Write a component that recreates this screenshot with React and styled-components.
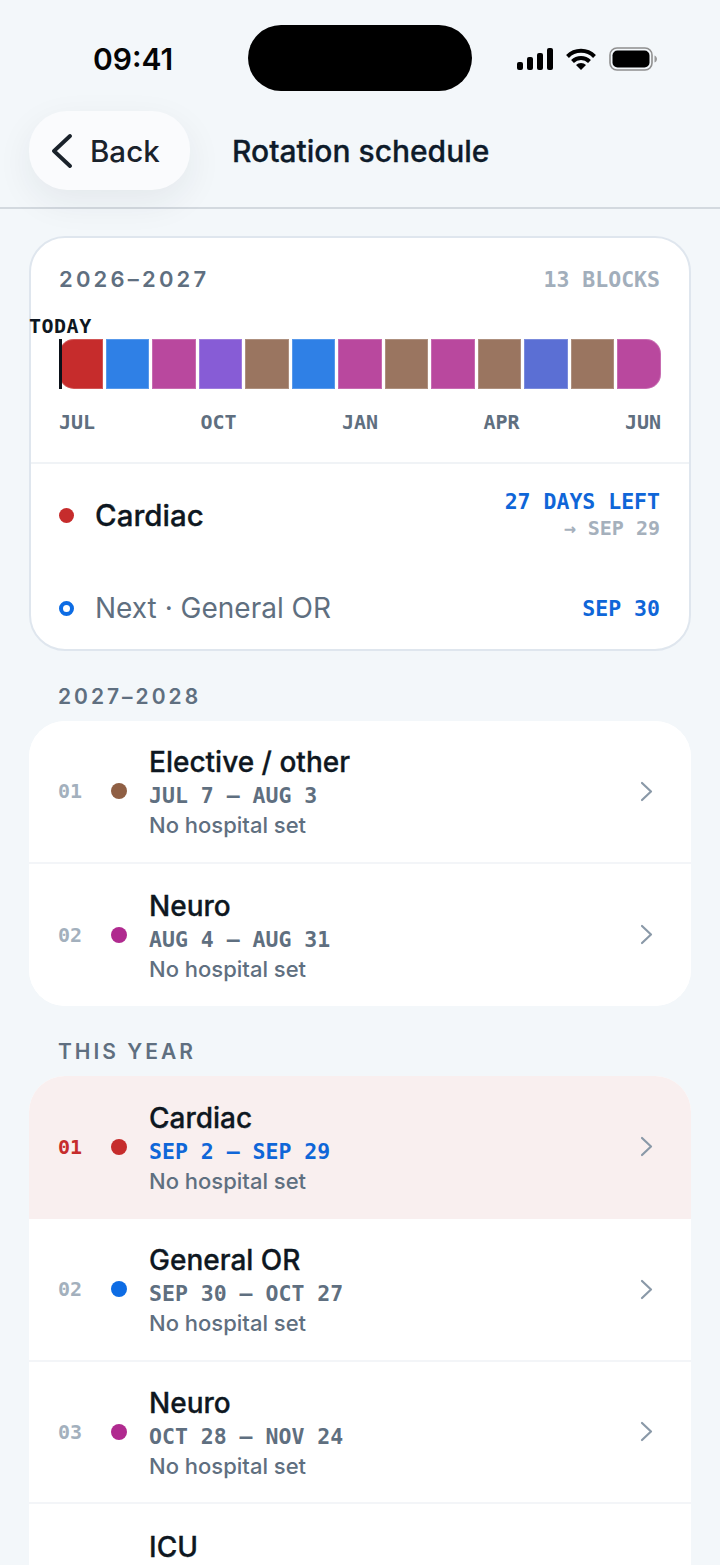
import React from 'react';
import styled, { createGlobalStyle } from 'styled-components';

const Global = createGlobalStyle`
    html, body {
        margin: 0;
        padding: 0;
        background: #f3f7fa;
        overflow: hidden;
    }
    * {
        box-sizing: border-box;
    }
`;

const SANS = '"Inter", "Liberation Sans", sans-serif';
const MONO = '"DejaVu Sans Mono", "Liberation Mono", monospace';

const Page = styled.div`
    width: 720px;
    height: 1565px;
    overflow: hidden;
    background: #f3f7fa;
    font-family: ${SANS};
    color: #0e1721;
`;

const StatusBar = styled.div`
    height: 111px;
    padding: 25px 63px 0 93px;
    display: flex;
    align-items: flex-start;
`;

const Clock = styled.div`
    width: 155px;
    font-size: 30px;
    line-height: 68px;
    font-weight: 600;
    color: #050505;
`;

const Island = styled.div`
    width: 224px;
    height: 66px;
    border-radius: 33px;
    background: #000;
`;

const StatusIcons = styled.div`
    margin-left: auto;
    height: 66px;
    display: flex;
    align-items: center;
    gap: 13px;
    padding-top: 1px;
`;

const NavBar = styled.div`
    height: 98px;
    padding: 0 29px;
    display: flex;
    align-items: flex-start;
    gap: 42px;
    border-bottom: 2px solid #d3d9df;
`;

const BackButton = styled.div`
    width: 161px;
    height: 79px;
    border-radius: 38px;
    background: #fafbfd;
    box-shadow: 0 12px 36px rgba(30, 40, 55, 0.07);
    display: flex;
    align-items: center;
    padding-left: 22px;
    gap: 17px;
    font-size: 29.5px;
    font-weight: 500;
    color: #1a222b;
`;

const NavTitle = styled.div`
    font-size: 30px;
    font-weight: 500;
    -webkit-text-stroke: 0.3px #0e1b2a;
    line-height: 80px;
    color: #0e1b2a;
`;

const Content = styled.div`
    padding: 27px 29px 0;
`;

const YearCard = styled.div`
    background: #fff;
    border: 2px solid #dfe6ee;
    border-radius: 36px;
    height: 415px;
`;

const YearTop = styled.div`
    height: 226px;
    padding: 26px 28px 0;
    border-bottom: 2px solid #f0f3f6;
`;

const YearHead = styled.div`
    display: flex;
    justify-content: space-between;
    align-items: center;
    height: 30px;
`;

const YearLabel = styled.div`
    font-size: 22px;
    font-weight: 600;
    letter-spacing: 3.2px;
    color: #5f6f80;
`;

const BlockCount = styled.div`
    font-family: ${MONO};
    font-size: 21.5px;
    font-weight: 700;
    padding-right: 1px;
    color: #a2aebb;
`;

const Bar = styled.div`
    position: relative;
    margin-top: 45px;
    height: 50px;
    display: grid;
    grid-template-columns: repeat(13, 1fr);
    gap: 3px;
`;

const Segment = styled.div`
    background: ${p => p.$color};
    box-shadow: inset 0 0 0 1px rgba(255, 255, 255, 0.2);
    &:first-child {
        border-radius: 15px 0 0 15px;
    }
    &:nth-child(13) {
        border-radius: 0 15px 15px 0;
    }
`;

const TodayLine = styled.div`
    position: absolute;
    left: 0;
    top: 0;
    bottom: 0;
    width: 3px;
    background: #0b1119;
`;

const TodayLabel = styled.div`
    position: absolute;
    left: -30px;
    top: -24px;
    font-family: ${MONO};
    font-size: 20px;
    line-height: 22px;
    font-weight: 700;
    letter-spacing: 0.5px;
    color: #0e1721;
`;

const Months = styled.div`
    margin-top: 20px;
    display: flex;
    justify-content: space-between;
    font-family: ${MONO};
    font-size: 20px;
    line-height: 26px;
    font-weight: 700;
    color: #5f6f80;
`;

const StatusRow = styled.div`
    height: ${p => p.$height}px;
    padding: 0 28px;
    display: flex;
    align-items: center;
`;

const CurrentDot = styled.span`
    width: 15px;
    height: 15px;
    border-radius: 50%;
    background: #c62c2c;
    margin-right: 21px;
`;

const NextDot = styled.span`
    width: 15px;
    height: 15px;
    border-radius: 50%;
    border: 4px solid #0d6ce4;
    margin-right: 21px;
`;

const CurrentName = styled.div`
    flex: 1;
    font-size: 29.5px;
    font-weight: 500;
    -webkit-text-stroke: 0.3px #0e1721;
    line-height: 34px;
    color: #0e1721;
`;

const NextName = styled.div`
    flex: 1;
    font-size: 28px;
    font-weight: 400;
    color: #5f6f80;
`;

const RightCol = styled.div`
    text-align: right;
    font-family: ${MONO};
    padding-right: 1px;
`;

const BlueMono = styled.div`
    font-size: 21.5px;
    line-height: 27px;
    font-weight: 700;
    color: #0f66d8;
`;

const GrayMono = styled.div`
    font-size: 20px;
    line-height: 27px;
    font-weight: 700;
    color: #a5b0bc;
`;

const SectionLabel = styled.div`
    margin-left: 29px;
    height: 70px;
    padding-top: 31px;
    line-height: 30px;
    font-size: 21px;
    font-weight: 600;
    letter-spacing: 3px;
    color: #5f6f80;
`;

const ListCard = styled.div`
    background: #fff;
    border-radius: 36px;
    overflow: hidden;
`;

const Row = styled.div`
    height: 142.67px;
    padding: 0 38px 0 29px;
    display: flex;
    align-items: center;
    background: ${p => (p.$active ? '#f9efef' : '#fff')};
    border-bottom: 2px solid ${p => (p.$active ? '#f9efef' : '#f3f5f8')};
    &:last-child {
        border-bottom: none;
    }
`;

const RowIndex = styled.div`
    width: 53px;
    font-family: ${MONO};
    font-size: 20px;
    font-weight: 700;
    color: ${p => (p.$active ? '#c62c2c' : '#a3b0bd')};
`;

const RowDot = styled.span`
    width: 16px;
    height: 16px;
    border-radius: 50%;
    background: ${p => p.$color};
    margin-right: 22px;
    flex: none;
`;

const RowText = styled.div`
    flex: 1;
`;

const RowTitle = styled.div`
    font-size: 28px;
    line-height: 36px;
    font-weight: 500;
    -webkit-text-stroke: 0.3px #0e1721;
    color: #0e1721;
`;

const RowDates = styled.div`
    font-family: ${MONO};
    font-size: 21.5px;
    line-height: 32px;
    font-weight: 700;
    color: ${p => (p.$active ? '#0f66d8' : '#5f6f80')};
`;

const RowSub = styled.div`
    font-size: 22px;
    line-height: 26px;
    font-weight: 500;
    color: #5f6f80;
`;

const Signal = () => (
    <svg width="36" height="22" viewBox="0 0 36 22" fill="#000">
        <rect x="0" y="14" width="6" height="8" rx="2" />
        <rect x="10" y="9" width="6" height="13" rx="2" />
        <rect x="20" y="5" width="6" height="17" rx="2" />
        <rect x="30" y="0" width="6" height="22" rx="2" />
    </svg>
);

const Wifi = () => (
    <svg width="30" height="22" viewBox="0 0 30 22" fill="none" stroke="#000" strokeWidth="4">
        <path d="M1.5 8.5a19 19 0 0 1 27 0" />
        <path d="M6.5 13.5a12 12 0 0 1 17 0" />
        <path d="M15 22l-5-5a7 7 0 0 1 10 0z" fill="#000" stroke="none" />
    </svg>
);

const Battery = () => (
    <svg width="48" height="24" viewBox="0 0 48 24" fill="none">
        <rect x="1" y="1" width="42" height="22" rx="7" stroke="#8f8f8f" strokeWidth="1.6" />
        <rect x="3.5" y="3.5" width="37" height="17" rx="5" fill="#000" />
        <path d="M45.5 8.5c1.5.5 2.5 2 2.5 3.5s-1 3-2.5 3.5z" fill="#9a9a9a" />
    </svg>
);

const BackChevron = () => (
    <svg width="22" height="34" viewBox="0 0 22 34" fill="none" stroke="#1a222b" strokeWidth="3.8" strokeLinecap="round" strokeLinejoin="round">
        <path d="M19 2 3 17l16 15" />
    </svg>
);

const RowChevron = () => (
    <svg width="13" height="21" viewBox="0 0 13 21" fill="none" stroke="#8a99a8" strokeWidth="2.2" strokeLinecap="round" strokeLinejoin="round">
        <path d="M2 2l9 8.5L2 19" />
    </svg>
);

const RED = '#c62c2c';
const BLUE = '#2f80e6';
const PINK = '#b9489e';
const PURPLE = '#875cd6';
const BROWN = '#9a7560';
const INDIGO = '#5b6fd4';

const segments = [RED, BLUE, PINK, PURPLE, BROWN, BLUE, PINK, BROWN, PINK, BROWN, INDIGO, BROWN, PINK];

const nextYear = [
    { n: '01', name: 'Elective / other', dates: 'JUL 7 — AUG 3', color: '#8f5f44' },
    { n: '02', name: 'Neuro', dates: 'AUG 4 — AUG 31', color: '#b02a8f' },
];

const thisYear = [
    { n: '01', name: 'Cardiac', dates: 'SEP 2 — SEP 29', color: '#c62c2c', active: true },
    { n: '02', name: 'General OR', dates: 'SEP 30 — OCT 27', color: '#0d6ce4' },
    { n: '03', name: 'Neuro', dates: 'OCT 28 — NOV 24', color: '#b02a8f' },
    { n: '04', name: 'ICU', dates: 'NOV 25 — DEC 22', color: '#5b6fd4' },
];

const RotationRow = ({ n, name, dates, color, active }) => (
    <Row $active={active}>
        <RowIndex $active={active}>{n}</RowIndex>
        <RowDot $color={color} />
        <RowText>
            <RowTitle>{name}</RowTitle>
            <RowDates $active={active}>{dates}</RowDates>
            <RowSub>No hospital set</RowSub>
        </RowText>
        <RowChevron />
    </Row>
);

const App = () => (
    <Page>
        <Global />
        <StatusBar>
            <Clock>09:41</Clock>
            <Island />
            <StatusIcons>
                <Signal />
                <Wifi />
                <Battery />
            </StatusIcons>
        </StatusBar>
        <NavBar>
            <BackButton>
                <BackChevron />
                Back
            </BackButton>
            <NavTitle>Rotation schedule</NavTitle>
        </NavBar>
        <Content>
            <YearCard>
                <YearTop>
                    <YearHead>
                        <YearLabel>2026–2027</YearLabel>
                        <BlockCount>13 BLOCKS</BlockCount>
                    </YearHead>
                    <Bar>
                        {segments.map((c, i) => <Segment key={i} $color={c} />)}
                        <TodayLine />
                        <TodayLabel>TODAY</TodayLabel>
                    </Bar>
                    <Months>
                        <span>JUL</span>
                        <span>OCT</span>
                        <span>JAN</span>
                        <span>APR</span>
                        <span>JUN</span>
                    </Months>
                </YearTop>
                <StatusRow $height={102}>
                    <CurrentDot />
                    <CurrentName>Cardiac</CurrentName>
                    <RightCol>
                        <BlueMono>27 DAYS LEFT</BlueMono>
                        <GrayMono>→ SEP 29</GrayMono>
                    </RightCol>
                </StatusRow>
                <StatusRow $height={84}>
                    <NextDot />
                    <NextName>Next · General OR</NextName>
                    <RightCol>
                        <BlueMono>SEP 30</BlueMono>
                    </RightCol>
                </StatusRow>
            </YearCard>
            <SectionLabel>2027–2028</SectionLabel>
            <ListCard>
                {nextYear.map(r => <RotationRow key={r.n} {...r} />)}
            </ListCard>
            <SectionLabel>THIS YEAR</SectionLabel>
            <ListCard>
                {thisYear.map(r => <RotationRow key={r.n} {...r} />)}
            </ListCard>
        </Content>
    </Page>
);

export default App;
